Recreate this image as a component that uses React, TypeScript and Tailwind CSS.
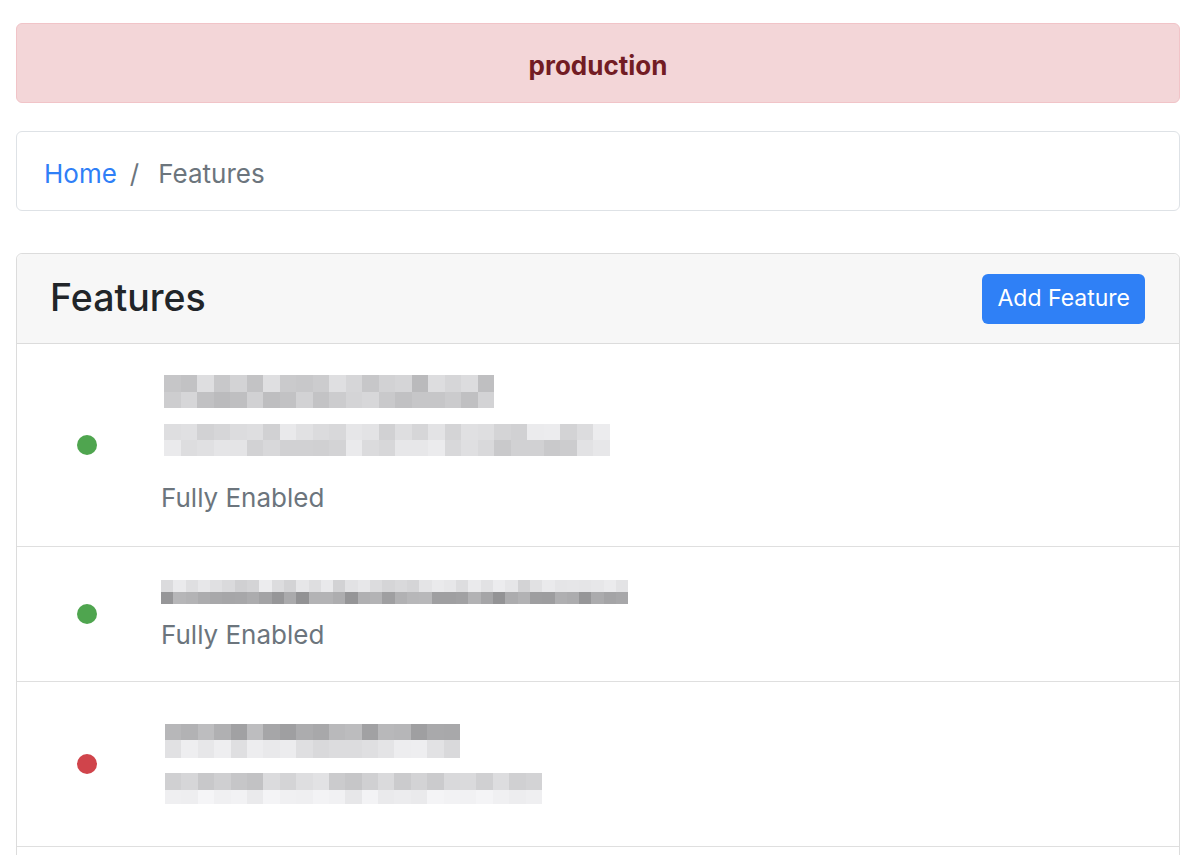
import React from 'react';

// deterministic grays for the blurred (pixelated) feature names
const grays = (count: number, seed: number, base: number, spread: number): string[] => {
  let s = seed;
  const out: string[] = [];
  for (let i = 0; i < count; i++) {
    s = (s * 9301 + 49297) % 233280;
    const v = Math.round(base + (s / 233280 - 0.5) * spread);
    const c = Math.max(0, Math.min(255, v));
    out.push(`rgb(${c},${c},${c + 2})`);
  }
  return out;
};

interface BlurLine {
  size: number;
  rows: { count: number; seed: number; base: number; spread: number; h: number }[];
}

const Pixelated: React.FC<{ line: BlurLine }> = ({ line }) => (
  <div className="flex flex-col">
    {line.rows.map((r, i) => (
      <div key={i} className="flex">
        {grays(r.count, r.seed, r.base, r.spread).map((c, j) => (
          <div key={j} style={{ width: line.size, height: r.h, background: c }} />
        ))}
      </div>
    ))}
  </div>
);

const Dot: React.FC<{ on: boolean }> = ({ on }) => (
  <div className="w-[144px] shrink-0 pl-[60px]">
    <div className={`h-5 w-5 rounded-full ${on ? 'bg-[#4fa54f]' : 'bg-[#d0444b]'}`} />
  </div>
);

const App: React.FC = () => {
  return (
    <div className="min-h-screen bg-white pl-4 pr-5 pt-[23px] font-['Inter',sans-serif]">
      <div className="flex h-20 items-center justify-center rounded-md border border-[#f1c4c8] bg-[#f3d6d8] pt-1">
        <span className="text-[26px] font-bold text-[#721c24]">production</span>
      </div>

      <nav className="mt-7 flex h-20 items-center rounded-md border border-[#dee2e6] bg-white px-[27px] pt-1 text-[26px]">
        <a href="#" className="text-[#2f7ff7]">Home</a>
        <span className="pl-[13px] pr-[19px] text-[#6c757d]">/</span>
        <span className="text-[#6c757d]">Features</span>
      </nav>

      <div className="mt-[42px] rounded-md border border-[#dcdcdc]">
        <div className="flex h-[90px] items-center justify-between rounded-t-md border-b border-[#dcdcdc] bg-[#f7f7f7] pl-[33px] pr-[34px]">
          <h1 className="text-[37.5px] font-medium text-[#212529]">Features</h1>
          <button className="h-[50px] rounded-md bg-[#2f80f6] px-[15px] text-[23px] text-white">Add Feature</button>
        </div>

        <div className="flex h-[203px] items-center border-b border-[#dfdfdf]">
          <Dot on />
          <div className="flex flex-col">
            <div className="pl-[3px]">
              <Pixelated line={{ size: 16.5, rows: [
                { count: 20, seed: 3, base: 205, spread: 40, h: 17 },
                { count: 20, seed: 11, base: 200, spread: 34, h: 16 },
              ] }} />
            </div>
            <div className="mt-4 pl-[3px]">
              <Pixelated line={{ size: 16.5, rows: [
                { count: 27, seed: 7, base: 222, spread: 30, h: 16 },
                { count: 27, seed: 19, base: 218, spread: 34, h: 16 },
              ] }} />
            </div>
            <div className="mt-[24px] text-[26px] leading-9 text-[#6c757d]">Fully Enabled</div>
          </div>
        </div>

        <div className="flex h-[135px] items-center border-b border-[#dfdfdf]">
          <Dot on />
          <div className="flex flex-col pt-1">
            <Pixelated line={{ size: 12.3, rows: [
              { count: 38, seed: 5, base: 222, spread: 30, h: 12 },
              { count: 38, seed: 23, base: 165, spread: 40, h: 12 },
            ] }} />
            <div className="mt-[13px] text-[26px] leading-9 text-[#6c757d]">Fully Enabled</div>
          </div>
        </div>

        <div className="flex h-[165px] items-center border-b border-[#dfdfdf]">
          <Dot on={false} />
          <div className="flex flex-col pl-1">
            <Pixelated line={{ size: 16.4, rows: [
              { count: 18, seed: 13, base: 175, spread: 36, h: 16 },
              { count: 18, seed: 29, base: 228, spread: 22, h: 18 },
            ] }} />
            <div className="mt-[15px]">
              <Pixelated line={{ size: 16.4, rows: [
                { count: 23, seed: 31, base: 210, spread: 34, h: 17 },
                { count: 23, seed: 37, base: 236, spread: 18, h: 14 },
              ] }} />
            </div>
          </div>
        </div>

        <div className="flex h-[165px] items-center">
          <Dot on />
          <div className="flex flex-col pl-1">
            <Pixelated line={{ size: 16.4, rows: [
              { count: 22, seed: 41, base: 190, spread: 36, h: 16 },
              { count: 22, seed: 43, base: 215, spread: 22, h: 16 },
            ] }} />
          </div>
        </div>
      </div>
    </div>
  );
};

export default App;
